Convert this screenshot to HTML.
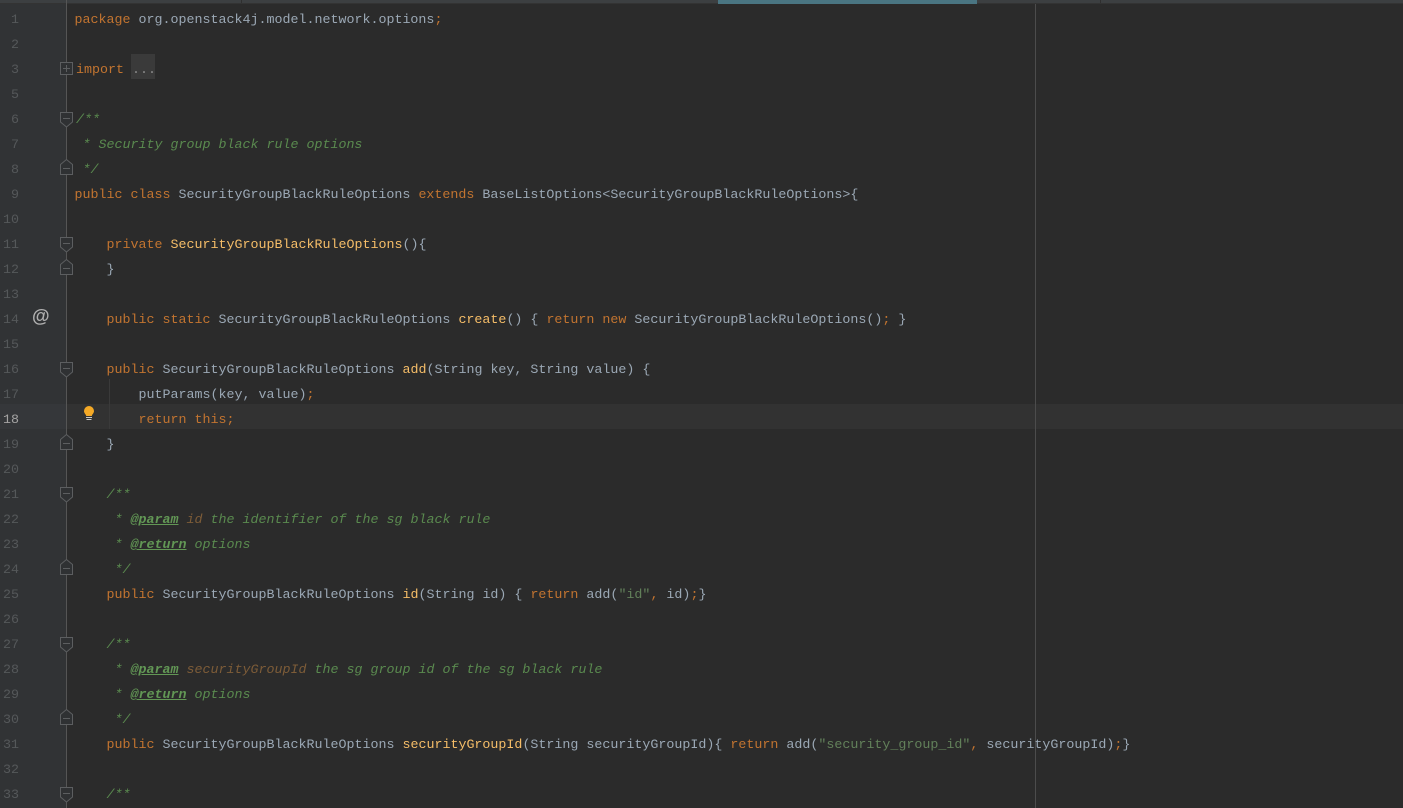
<!DOCTYPE html>
<html><head><meta charset="utf-8">
<style>
html,body{margin:0;padding:0;background:#2b2b2b;}
#r{position:relative;width:1403px;height:808px;overflow:hidden;background:#2b2b2b;font-family:"Liberation Mono",monospace;font-size:13.33px;color:#9ba8b5;}
.a{position:absolute;}
.l{position:absolute;left:74.5px;white-space:pre;height:25px;line-height:25px;margin-top:2px;}
.n{position:absolute;left:11px;white-space:pre;height:25px;line-height:25px;color:#55585a;margin-top:2px;}
.k{color:#c27430}.f{color:#f5bd68}.c{color:#5a8a4f;font-style:italic}.s{color:#62805a}
.t{color:#629755;font-style:italic;font-weight:bold;text-decoration:underline}.p{color:#7d5c38;font-style:italic}
</style></head><body><div id="r">
<div class="a" style="left:0;top:0;width:66px;height:808px;background:#313335"></div>
<div class="a" style="left:0;top:404px;width:66px;height:25px;background:#35373a"></div>
<div class="a" style="left:67px;top:404px;width:1336px;height:25px;background:#323232"></div>
<div class="a" style="left:0;top:0;width:1403px;height:3px;background:#3c3f41;border-bottom:1px solid #333"></div>
<div class="a" style="left:241px;top:0;width:1px;height:3px;background:#2f2f2f"></div>
<div class="a" style="left:1100px;top:0;width:1px;height:3px;background:#2f2f2f"></div>
<div class="a" style="left:718px;top:0;width:259px;height:4px;background:#4a7582"></div>
<div class="a" style="left:1035px;top:4px;width:1px;height:804px;background:#4c4c4c"></div>
<div class="a" style="left:66px;top:0;width:1px;height:808px;background:#555"></div>
<div class="a" style="left:109px;top:379px;width:1px;height:50px;background:#3a3a3a"></div>
<div class="a" style="left:131px;top:54px;width:24px;height:25px;background:#3a3a3a"></div>

<svg class="a" style="left:0;top:0" width="1403" height="808" fill="#2f3133" stroke="#5c5e60" stroke-width="1">
<path d="M60.500 62.500h12v12h-12zM63 68.500h7M66.500 65v7"/>
<path d="M60.500 112.500h12v9.500l-6 5-6-5zM63 118.500h7"/>
<path d="M60.500 174.500h12v-10l-6-5-6 5zM63 168.500h7"/>
<path d="M60.500 237.500h12v9.500l-6 5-6-5zM63 243.500h7"/>
<path d="M60.500 274.500h12v-10l-6-5-6 5zM63 268.500h7"/>
<path d="M60.500 362.500h12v9.500l-6 5-6-5zM63 368.500h7"/>
<path d="M60.500 449.500h12v-10l-6-5-6 5zM63 443.500h7"/>
<path d="M60.500 487.500h12v9.500l-6 5-6-5zM63 493.500h7"/>
<path d="M60.500 574.500h12v-10l-6-5-6 5zM63 568.500h7"/>
<path d="M60.500 637.500h12v9.500l-6 5-6-5zM63 643.500h7"/>
<path d="M60.500 724.500h12v-10l-6-5-6 5zM63 718.500h7"/>
<path d="M60.500 787.500h12v9.500l-6 5-6-5zM63 793.500h7"/>
<path d="M84 411a5 5 0 1 1 10 0c0 2.200-1.700 3-2.200 5h-5.600c-.5-2-2.200-2.800-2.200-5z" fill="#f4a926" stroke="none"/>
<path d="M86 417.500h6M86.500 419.500h5" stroke="#c9c9c9" fill="none"/>
</svg>
<div class="a" style="left:32px;top:305px;font-family:'Liberation Sans',sans-serif;font-size:18px;line-height:22px;color:#b0b0b0;font-weight:bold">@</div>

<div class="n" style="top:6px">1</div>
<div class="n" style="top:31px">2</div>
<div class="n" style="top:56px">3</div>
<div class="n" style="top:81px">5</div>
<div class="n" style="top:106px">6</div>
<div class="n" style="top:131px">7</div>
<div class="n" style="top:156px">8</div>
<div class="n" style="top:181px">9</div>
<div class="n" style="top:206px;left:3px">10</div>
<div class="n" style="top:231px;left:3px">11</div>
<div class="n" style="top:256px;left:3px">12</div>
<div class="n" style="top:281px;left:3px">13</div>
<div class="n" style="top:306px;left:3px">14</div>
<div class="n" style="top:331px;left:3px">15</div>
<div class="n" style="top:356px;left:3px">16</div>
<div class="n" style="top:381px;left:3px">17</div>
<div class="n" style="top:406px;left:3px;color:#a4a3a3">18</div>
<div class="n" style="top:431px;left:3px">19</div>
<div class="n" style="top:456px;left:3px">20</div>
<div class="n" style="top:481px;left:3px">21</div>
<div class="n" style="top:506px;left:3px">22</div>
<div class="n" style="top:531px;left:3px">23</div>
<div class="n" style="top:556px;left:3px">24</div>
<div class="n" style="top:581px;left:3px">25</div>
<div class="n" style="top:606px;left:3px">26</div>
<div class="n" style="top:631px;left:3px">27</div>
<div class="n" style="top:656px;left:3px">28</div>
<div class="n" style="top:681px;left:3px">29</div>
<div class="n" style="top:706px;left:3px">30</div>
<div class="n" style="top:731px;left:3px">31</div>
<div class="n" style="top:756px;left:3px">32</div>
<div class="n" style="top:781px;left:3px">33</div>

<div class="l" style="top:6px"><span class="k">package</span> org.openstack4j.model.network.options<span class="k">;</span></div>
<div class="l" style="top:56px;left:76px"><span class="k">import</span> <span style="color:#8a8a8a">...</span></div>
<div class="l c" style="top:106px;left:76px">/**</div>
<div class="l c" style="top:131px"> * Security group black rule options</div>
<div class="l c" style="top:156px"> */</div>
<div class="l" style="top:181px"><span class="k">public class</span> SecurityGroupBlackRuleOptions <span class="k">extends</span> BaseListOptions&lt;SecurityGroupBlackRuleOptions&gt;{</div>
<div class="l" style="top:231px">    <span class="k">private</span> <span class="f">SecurityGroupBlackRuleOptions</span>(){</div>
<div class="l" style="top:256px">    }</div>
<div class="l" style="top:306px">    <span class="k">public static</span> SecurityGroupBlackRuleOptions <span class="f">create</span>() { <span class="k">return new</span> SecurityGroupBlackRuleOptions()<span class="k">;</span> }</div>
<div class="l" style="top:356px">    <span class="k">public</span> SecurityGroupBlackRuleOptions <span class="f">add</span>(String key, String value) {</div>
<div class="l" style="top:381px">        putParams(key, value)<span class="k">;</span></div>
<div class="l" style="top:406px">        <span class="k">return this;</span></div>
<div class="l" style="top:431px">    }</div>
<div class="l c" style="top:481px">    /**</div>
<div class="l c" style="top:506px">     * <span class="t">@param</span> <span class="p">id</span> the identifier of the sg black rule</div>
<div class="l c" style="top:531px">     * <span class="t">@return</span> options</div>
<div class="l c" style="top:556px">     */</div>
<div class="l" style="top:581px">    <span class="k">public</span> SecurityGroupBlackRuleOptions <span class="f">id</span>(String id) { <span class="k">return</span> add(<span class="s">"id"</span><span class="k">,</span> id)<span class="k">;</span>}</div>
<div class="l c" style="top:631px">    /**</div>
<div class="l c" style="top:656px">     * <span class="t">@param</span> <span class="p">securityGroupId</span> the sg group id of the sg black rule</div>
<div class="l c" style="top:681px">     * <span class="t">@return</span> options</div>
<div class="l c" style="top:706px">     */</div>
<div class="l" style="top:731px">    <span class="k">public</span> SecurityGroupBlackRuleOptions <span class="f">securityGroupId</span>(String securityGroupId){ <span class="k">return</span> add(<span class="s">"security_group_id"</span><span class="k">,</span> securityGroupId)<span class="k">;</span>}</div>
<div class="l c" style="top:781px">    /**</div>
</div></body></html>
